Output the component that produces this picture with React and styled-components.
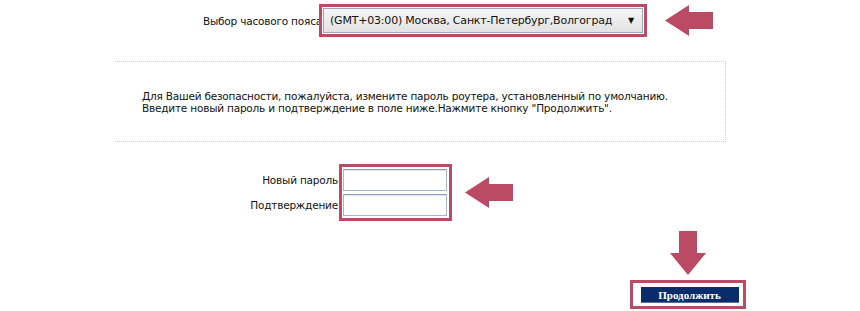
import React from "react";
import styled, { createGlobalStyle } from "styled-components";

const GlobalStyle = createGlobalStyle`
  html, body {
    margin: 0;
    padding: 0;
    background: #fff;
  }
  body {
    font-family: "DejaVu Sans", Verdana, sans-serif;
    font-size: 10.5px;
    letter-spacing: -0.2px;
    color: #111;
  }
`;

const Page = styled.div`
  width: 860px;
  height: 311px;
  overflow: hidden;
  display: flex;
  flex-direction: column;
`;

const TopRow = styled.div`
  display: flex;
  align-items: center;
  margin-top: 4px;
  padding-left: 203px;
`;

const ZoneLabel = styled.span`
  width: 116px;
  white-space: nowrap;
  overflow: visible;
`;

const Highlight = styled.div`
  position: relative;
  border: 3px solid #bb4a65;
  background: #fff;
  padding: ${p => p.$pad || "1px"};
  display: flex;
  flex-direction: column;
  gap: 3px;
`;

const SelectBox = styled.div`
  width: 320px;
  height: 25px;
  border: 1px solid #9aa8bb;
  background: linear-gradient(#f5f5f5, #e3e3e3);
  display: flex;
  align-items: center;
  justify-content: space-between;
  padding: 0 8px 0 6px;
  box-sizing: border-box;
  font-size: 11px;
  color: #111;
`;

const Caret = styled.span`
  font-size: 8px;
  color: #111;
`;

const ArrowWrap = styled.div`
  margin-left: ${p => p.$ml || 0}px;
  display: flex;
`;

const Notice = styled.div`
  margin: 24px 0 0 115px;
  width: 611px;
  height: 81px;
  border-top: 1px dotted #ccc;
  border-right: 1px dotted #ccc;
  border-bottom: 1px dotted #ccc;
  box-sizing: border-box;
  padding: 28px 0 0 27px;
  line-height: 12px;
`;

const PasswordRow = styled.div`
  display: flex;
  align-items: center;
  margin-top: 22px;
`;

const Labels = styled.div`
  width: 339px;
  display: flex;
  flex-direction: column;
  align-items: flex-end;
  gap: 3px;
`;

const FieldLabel = styled.label`
  height: 22px;
  line-height: 22px;
  padding-right: 1px;
`;

const Input = styled.input`
  width: 104px;
  height: 22px;
  box-sizing: border-box;
  border: 1px solid #a9b6c7;
  border-top-color: #8fa0b5;
  box-shadow: inset 0 1px 1px #dfe5ec;
  margin: 0;
  padding: 0 3px;
  background: #fff;
`;

const ButtonArea = styled.div`
  margin: 10px 0 0 631px;
  width: 113px;
  display: flex;
  flex-direction: column;
  align-items: center;
  gap: 5px;
`;

const ContinueButton = styled.button`
  width: 98px;
  height: 16px;
  margin: 1px 1px 0 3px;
  background: #0b2c6b;
  border: none;
  border-bottom: 1px solid #5a6f9a;
  color: #fff;
  font-family: "Liberation Serif", "Times New Roman", serif;
  font-weight: bold;
  font-size: 11px;
  letter-spacing: 0;
  padding: 0;
  cursor: pointer;
`;

function LeftArrow() {
  return (
    <svg width="48" height="31" viewBox="0 0 48 31">
      <polygon points="0,15.5 24,0 24,7 48,7 48,24 24,24 24,31" fill="#bb4a65" />
    </svg>
  );
}

function DownArrow() {
  return (
    <svg width="36" height="44" viewBox="0 0 36 44">
      <polygon points="9,0 27,0 27,22 36,22 18,44 0,22 9,22" fill="#bb4a65" />
    </svg>
  );
}

export default function App() {
  return (
    <Page>
      <GlobalStyle />
      <TopRow>
        <ZoneLabel>Выбор часового пояса</ZoneLabel>
        <Highlight>
          <SelectBox>
            <span>(GMT+03:00) Москва, Санкт-Петербург,Волгоград</span>
            <Caret>▼</Caret>
          </SelectBox>
        </Highlight>
        <ArrowWrap $ml={18}><LeftArrow /></ArrowWrap>
      </TopRow>

      <Notice>
        Для Вашей безопасности, пожалуйста, измените пароль роутера, установленный по умолчанию.<br />
        Введите новый пароль и подтверждение в поле ниже.Нажмите кнопку "Продолжить".
      </Notice>

      <PasswordRow>
        <Labels>
          <FieldLabel htmlFor="pw1">Новый пароль</FieldLabel>
          <FieldLabel htmlFor="pw2">Подтверждение</FieldLabel>
        </Labels>
        <Highlight $pad="2px 2px 2px 1px">
          <Input id="pw1" type="password" />
          <Input id="pw2" type="password" />
        </Highlight>
        <ArrowWrap $ml={13}><LeftArrow /></ArrowWrap>
      </PasswordRow>

      <ButtonArea>
        <DownArrow />
        <Highlight $pad="3px 3px 3px 5px">
          <ContinueButton type="button">Продолжить</ContinueButton>
        </Highlight>
      </ButtonArea>
    </Page>
  );
}
